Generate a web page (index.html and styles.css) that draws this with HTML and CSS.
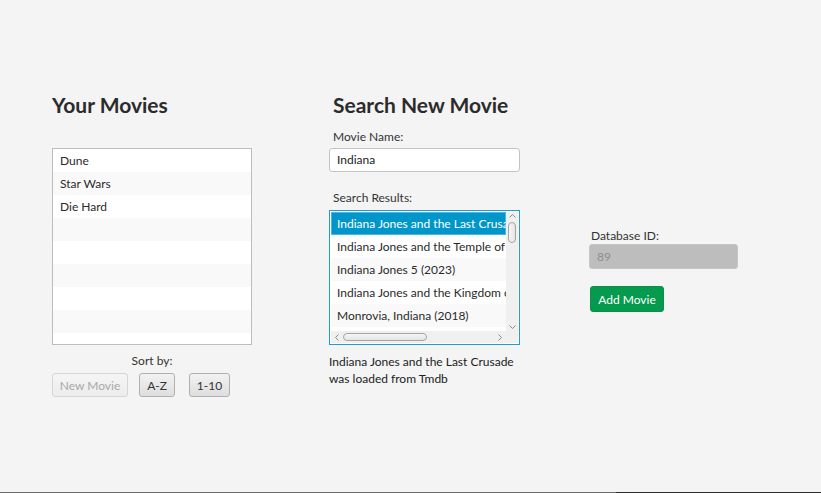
FILE: index.html
```html
<!DOCTYPE html>
<html>
<head>
<meta charset="utf-8">
<link rel="stylesheet" href="styles.css">
</head>
<body>
<div class="app">
  <div class="col col-movies">
    <h1 class="title">Your Movies</h1>
    <div class="list list-movies">
      <div class="row">Dune</div>
      <div class="row odd">Star Wars</div>
      <div class="row">Die Hard</div>
      <div class="row odd"></div>
      <div class="row"></div>
      <div class="row odd"></div>
      <div class="row"></div>
      <div class="row odd"></div>
      <div class="row"></div>
    </div>
    <div class="sort-label">Sort by:</div>
    <div class="btn-row">
      <button class="btn btn-disabled">New Movie</button>
      <button class="btn btn-az">A-Z</button>
      <button class="btn btn-110">1-10</button>
    </div>
  </div>

  <div class="col col-search">
    <h1 class="title title-search">Search New Movie</h1>
    <div class="label label-name">Movie Name:</div>
    <div class="field">Indiana</div>
    <div class="label label-results">Search Results:</div>
    <div class="list list-results">
      <div class="results-body">
        <div class="results-rows">
          <div class="row sel">Indiana Jones and the Last Crusade (1989)</div>
          <div class="row">Indiana Jones and the Temple of Doom (1984)</div>
          <div class="row odd">Indiana Jones 5 (2023)</div>
          <div class="row">Indiana Jones and the Kingdom of the Crystal Skull (2008)</div>
          <div class="row odd">Monrovia, Indiana (2018)</div>
        </div>
        <div class="vscroll">
          <svg class="arrow" width="11" height="8" viewBox="0 0 11 8"><path d="M2.5 5.5 L5.5 2.5 L8.5 5.5" fill="none" stroke="#8a8a8a" stroke-width="1"/></svg>
          <div class="vtrack"><div class="vthumb"></div></div>
          <svg class="arrow" width="11" height="8" viewBox="0 0 11 8"><path d="M2.5 2.5 L5.5 5.5 L8.5 2.5" fill="none" stroke="#8a8a8a" stroke-width="1"/></svg>
        </div>
      </div>
      <div class="hscroll">
        <svg class="harrow" width="8" height="11" viewBox="0 0 8 11"><path d="M5.5 2.5 L2.5 5.5 L5.5 8.5" fill="none" stroke="#8a8a8a" stroke-width="1"/></svg>
        <div class="htrack"><div class="hthumb"></div></div>
        <svg class="harrow" width="8" height="11" viewBox="0 0 8 11"><path d="M2.5 2.5 L5.5 5.5 L2.5 8.5" fill="none" stroke="#8a8a8a" stroke-width="1"/></svg>
        <div class="corner"></div>
      </div>
    </div>
    <div class="status">Indiana Jones and the Last Crusade<br>was loaded from Tmdb</div>
  </div>

  <div class="col col-db">
    <div class="label label-db">Database ID:</div>
    <div class="field field-disabled">89</div>
    <button class="btn btn-add">Add Movie</button>
  </div>
</div>
<div class="bottom-line"></div>
</body>
</html>
```

FILE: styles.css
```css
html, body {
  margin: 0;
  padding: 0;
}
body {
  width: 821px;
  height: 493px;
  background: #f4f4f4;
  overflow: hidden;
  font-family: Lato, "Noto Sans", sans-serif;
  font-size: 12px;
  color: #333;
  position: relative;
}
.app {
  display: flex;
  align-items: flex-start;
  padding-top: 92px;
  height: 400px;
}
.col {
  display: flex;
  flex-direction: column;
  align-items: flex-start;
}
.col-movies {
  margin-left: 52px;
  width: 200px;
}
.col-search {
  margin-left: 77px;
  width: 191px;
}
.col-db {
  margin-left: 69px;
  margin-top: 136px;
  width: 149px;
}
.title {
  margin: 0;
  font-size: 21px;
  font-weight: 700;
  line-height: 26px;
  color: #2b2b2b;
}
.title-search {
  margin-left: 4px;
}
.list {
  box-sizing: border-box;
  background: #fff;
  border: 1px solid #bdbdbd;
}
.list-movies {
  margin-top: 30px;
  width: 200px;
  height: 197px;
  overflow: hidden;
}
.row {
  height: 23px;
  line-height: 23px;
  padding-left: 7px;
  white-space: nowrap;
  overflow: hidden;
  background: #fff;
  color: #2a2a2a;
}
.row.odd {
  background: #f9f9f9;
}
.sort-label {
  width: 200px;
  margin-top: 7px;
  text-align: center;
  line-height: 18px;
  color: #333;
}
.btn-row {
  display: flex;
  margin-top: 3px;
}
.btn {
  box-sizing: border-box;
  font-family: inherit;
  font-size: 12px;
  height: 24px;
  padding: 0;
  white-space: nowrap;
  text-align: center;
  border: 1px solid #b0b0b0;
  border-radius: 3px;
  background: linear-gradient(#f2f2f2, #dedede);
  color: #333;
}
.btn-disabled {
  width: 76px;
  color: #a8a8a8;
  border-color: #d6d6d6;
  background: linear-gradient(#f5f5f5, #ececec);
}
.btn-az {
  margin-left: 11px;
  width: 36px;
}
.btn-110 {
  margin-left: 14px;
  width: 41px;
}
.label {
  line-height: 16px;
  color: #333;
}
.label-name {
  margin-top: 11px;
  margin-left: 4px;
}
.field {
  box-sizing: border-box;
  margin-top: 3px;
  width: 191px;
  height: 24px;
  line-height: 22px;
  padding-left: 7px;
  background: #fff;
  border: 1px solid #c4c4c4;
  border-radius: 3px;
  color: #222;
}
.label-results {
  margin-top: 18px;
  margin-left: 4px;
}
.list-results {
  margin-top: 4px;
  width: 191px;
  height: 135px;
  border: 1px solid #1a9fd6;
  padding: 1px;
  display: flex;
  flex-direction: column;
  background: #fff;
}
.results-body {
  display: flex;
  height: 120px;
}
.results-rows {
  flex: 1;
  overflow: hidden;
}
.results-rows .row {
  padding-left: 6px;
}
.row.sel {
  background: #0096c9;
  color: #fff;
  box-shadow: inset 0 0 0 1px #4cb6de;
}
.vscroll {
  width: 12px;
  background: #f0f0f0;
  display: flex;
  flex-direction: column;
  align-items: center;
}
.arrow {
  display: block;
  flex: none;
}
.vtrack {
  flex: 1;
  width: 12px;
}
.vthumb {
  margin: 2px auto 0;
  width: 8px;
  height: 21px;
  box-sizing: border-box;
  border: 1px solid #a5a5a5;
  border-radius: 4px;
  background: linear-gradient(90deg, #f6f6f6, #e4e4e4);
}
.hscroll {
  height: 12px;
  background: #f0f0f0;
  display: flex;
  align-items: center;
}
.harrow {
  display: block;
  flex: none;
  margin: 0 2px;
}
.htrack {
  flex: 1;
}
.hthumb {
  width: 84px;
  height: 8px;
  box-sizing: border-box;
  border: 1px solid #a5a5a5;
  border-radius: 4px;
  background: linear-gradient(#f6f6f6, #e4e4e4);
}
.corner {
  width: 12px;
  height: 12px;
  background: #f0f0f0;
}
.status {
  margin-top: 8px;
  line-height: 17px;
  color: #222;
}
.label-db {
  margin-left: 2px;
}
.field-disabled {
  margin-top: 0;
  width: 149px;
  height: 25px;
  line-height: 23px;
  background: #bdbdbd;
  border-color: #c6c6c6;
  color: #8e8e8e;
}
.btn-add {
  margin-top: 17px;
  margin-left: 1px;
  width: 74px;
  height: 26px;
  background: #069a4e;
  border: 1px solid #0a8f48;
  color: #fff;
}
.bottom-line {
  position: absolute;
  left: 0;
  right: 0;
  bottom: 0;
  height: 1px;
  background: linear-gradient(90deg, #6a6a6a 0, #6a6a6a 75%, #2a2a2a 75%, #2a2a2a 100%);
}
```
